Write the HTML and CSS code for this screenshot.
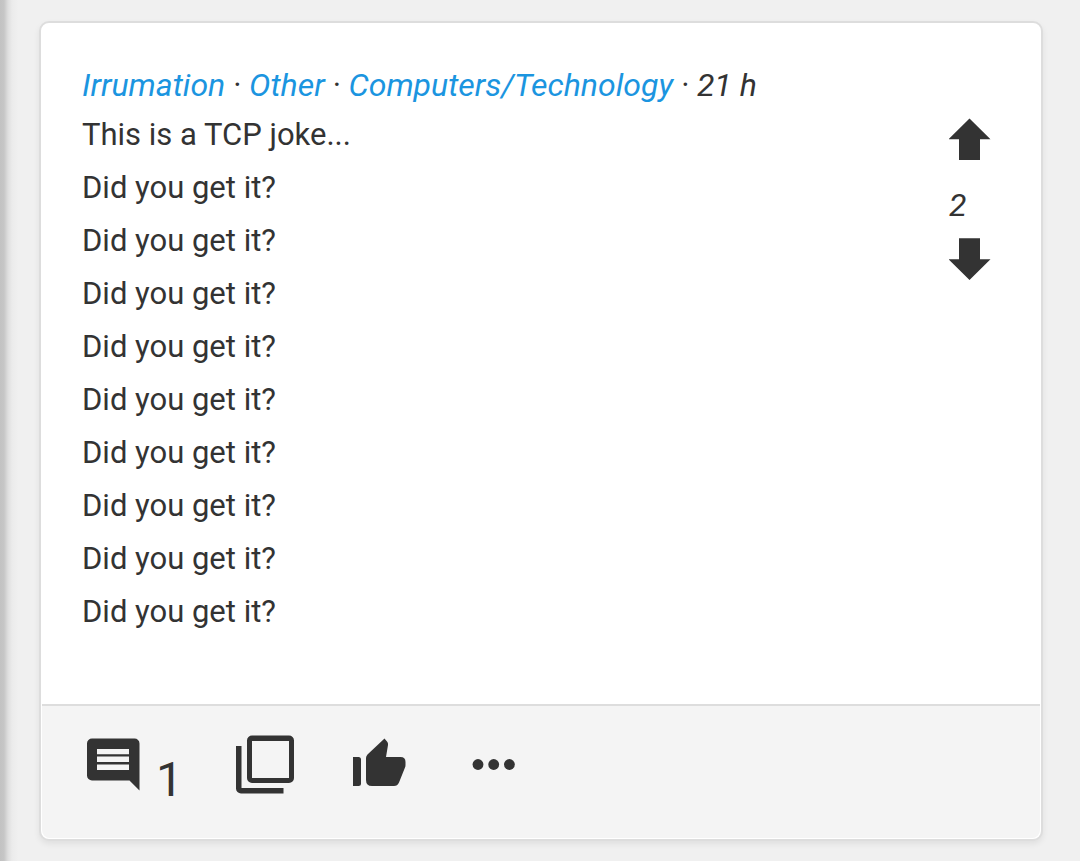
FILE: index.html
```html
<!DOCTYPE html>
<html lang="en">
<head>
  <meta charset="UTF-8">
  <meta name="viewport" content="width=device-width, initial-scale=1">
  <title>TCP joke</title>
  <link rel="stylesheet" href="styles.css">
</head>
<body>
  <article class="card">
    <div class="card-main">
      <div class="post">
        <p class="meta"><a href="#">Irrumation</a> · <a href="#">Other</a> · <a href="#">Computers/Technology</a> · 21 h</p>
        <div class="joke">
          <p>This is a TCP joke...</p>
          <p>Did you get it?</p>
          <p>Did you get it?</p>
          <p>Did you get it?</p>
          <p>Did you get it?</p>
          <p>Did you get it?</p>
          <p>Did you get it?</p>
          <p>Did you get it?</p>
          <p>Did you get it?</p>
          <p>Did you get it?</p>
        </div>
      </div>

      <div class="votes">
        <button type="button" aria-label="Vote up">
          <svg width="42" height="42" viewBox="0 0 42 42"><path d="M20.500 .500 41.500 21.300H31V42.300H10V21.300H-.500z"/></svg>
        </button>
        <span class="score">2</span>
        <button type="button" aria-label="Vote down">
          <svg width="42" height="42" viewBox="0 0 42 42"><path d="M20.500 42 -.500 21.300H10V.300H31V21.300H41.500z"/></svg>
        </button>
      </div>
    </div>

    <footer class="actions">
      <button type="button" class="comments" aria-label="Comments">
        <svg width="54" height="60" viewBox="0 0 54 60"><path fill-rule="evenodd" d="M6 3.500H48.500a5 5 0 0 1 5 5V55.500L43.500 45.500H6a5 5 0 0 1-5-5V8.500a5 5 0 0 1 5-5zM11 14V19.200H43V14zM11 21.600V27H43V21.600zM11 29.500V35H43V29.500z"/></svg>
        <span class="count">1</span>
      </button>
      <button type="button" class="copy" aria-label="Copy">
        <svg width="60" height="60" viewBox="0 0 60 60"><path fill-rule="evenodd" d="M17 .500H54a5 5 0 0 1 5 5V43a5 5 0 0 1-5 5H17a5 5 0 0 1-5-5V5.500a5 5 0 0 1 5-5zM17 6V43H54V6zM1 11H6.500V53H48.500V58.500H6a5 5 0 0 1-5-5z"/></svg>
      </button>
      <button type="button" class="like" aria-label="Like">
        <svg width="54" height="60" viewBox="0 0 54 60"><path d="M1 22H6.500Q9 22 9 24.500V48.500Q9 51 6.500 51H1zM14 23Q14 21 15.500 19.500L32.500 3.500 35 6.500Q36.300 8 36 10L34 22H48.500Q53.500 22 53.500 27V30Q53.500 31.500 53 32.500L47 47.500Q45.500 51 42 51H20Q14 51 14 45z"/></svg>
      </button>
      <button type="button" aria-label="More">
        <svg width="44" height="60" viewBox="0 0 44 60"><circle cx="6" cy="29.500" r="5.400"/><circle cx="21.700" cy="29.500" r="5.400"/><circle cx="37.400" cy="29.500" r="5.400"/></svg>
      </button>
    </footer>
  </article>
</body>
</html>
```

FILE: styles.css
```css
* {
  box-sizing: border-box;
}

body {
  margin: 0;
  min-height: 100vh;
  padding: 21px 37px 20px 39px;
  background: linear-gradient(to right, #c2c2c2 0, #c6c6c6 4px, #dedede 8px, #ebebeb 12px, #f0f0f0 18px);
  color: #333;
  font-family: Roboto, sans-serif;
  font-size: 31px;
}

p {
  margin: 0;
}

a {
  color: #1b95e0;
  text-decoration: none;
}

button {
  padding: 0;
  border: 0;
  background: none;
  color: inherit;
  font: inherit;
  cursor: pointer;
}

svg {
  display: block;
  fill: #333;
}

.card {
  padding: 0 1px 1px;
  border: 2px solid #ddd;
  border-radius: 10px;
  background: #fff;
  box-shadow: 0 3px 6px rgba(0, 0, 0, 0.07);
}

.card-main {
  display: flex;
  justify-content: space-between;
  padding: 39px 49px 66px 40px;
}

.meta,
.score {
  font-size: 32px;
  font-style: italic;
}

.meta {
  line-height: 46px;
}

.joke {
  line-height: 53px;
}

.votes {
  display: flex;
  flex-direction: column;
  padding-top: 56px;
}

.score {
  padding: 26px 0 14px;
  line-height: 38px;
}

.actions {
  display: flex;
  align-items: flex-start;
  padding: 29px 44px 30px;
  border-top: 2px solid #ddd;
  border-radius: 0 0 8px 8px;
  background: #f4f4f4;
}

.comments {
  display: flex;
  gap: 16px;
  margin-right: 52px;
}

.count {
  padding-top: 17px;
  font-size: 48px;
  line-height: 56px;
}

.copy {
  margin-right: 57px;
}

.like {
  margin-right: 66px;
}
```
